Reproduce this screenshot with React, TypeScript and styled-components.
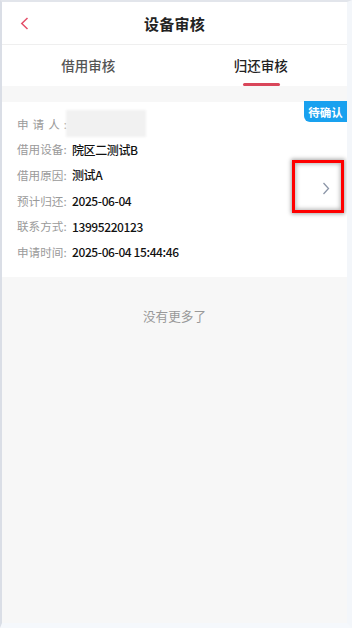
import React from "react";
import styled, { createGlobalStyle } from "styled-components";

const Global = createGlobalStyle`
  html, body { margin: 0; padding: 0; }
  body {
    background: #f4f7fb;
    font-family: "Noto Sans CJK SC", "Noto Sans", sans-serif;
  }
  * { box-sizing: border-box; }
`;

const Frame = styled.div`
  width: 352px;
  height: 628px;
  border-top: 2px solid #e2e5eb;
  border-left: 2px solid #dadee6;
  border-right: 5px solid #f3f6fa;
  border-bottom: 5px solid #f5f8fc;
  background: #f7f7f7;
  display: flex;
  flex-direction: column;
  overflow: hidden;
  position: relative;
`;

const Header = styled.div`
  height: 43px;
  background: #fff;
  display: grid;
  grid-template-columns: 44px 1fr 44px;
  align-items: center;
  border-bottom: 1px solid #efefef;
`;

const Back = styled.div`
  display: flex;
  align-items: center;
  padding-left: 18px;
  height: 100%;
`;

const Title = styled.div`
  text-align: center;
  font-size: 15px;
  font-weight: 700;
  color: #222;
  letter-spacing: 0.2px;
`;

const Tabs = styled.div`
  height: 41px;
  background: #fff;
  display: grid;
  grid-template-columns: 1fr 1fr;
`;

const Tab = styled.div<{ $active?: boolean }>`
  position: relative;
  display: flex;
  align-items: center;
  justify-content: center;
  font-size: 13.5px;
  font-weight: 500;
  color: ${(p) => (p.$active ? "#222" : "#555")};
  padding-bottom: 2px;
  &::after {
    content: "";
    display: ${(p) => (p.$active ? "block" : "none")};
    position: absolute;
    left: 50%;
    bottom: 0;
    width: 37px;
    height: 3px;
    margin-left: -18px;
    border-radius: 2px;
    background: #d9465a;
  }
`;

const List = styled.div`
  padding-top: 16px;
  display: flex;
  flex-direction: column;
`;

const Card = styled.div`
  position: relative;
  background: #fff;
  padding: 9px 0 12px 15px;
  display: flex;
  flex-direction: column;
`;

const Row = styled.div`
  height: 25.6px;
  display: flex;
  align-items: center;
  font-size: 12px;
  white-space: nowrap;
`;

const Label = styled.span<{ $spaced?: boolean }>`
  color: #9a9a9a;
  width: 55px;
  letter-spacing: ${(p) => (p.$spaced ? "4px" : "0")};
  font-size: 11.6px;
`;

const Value = styled.span`
  color: #111;
  font-weight: 500;
  letter-spacing: -0.4px;
`;

const Blur = styled.span`
  display: inline-block;
  width: 80px;
  height: 27px;
  background: #f1f1f1;
  filter: blur(1px);
  margin-left: -6px;
`;

const Badge = styled.div`
  position: absolute;
  top: -1px;
  right: 0;
  width: 43px;
  height: 21px;
  background: #19a1ef;
  color: #fff;
  font-size: 11.5px;
  font-weight: 700;
  display: flex;
  align-items: center;
  justify-content: center;
  border-bottom-left-radius: 6px;
`;

const Arrow = styled.div`
  position: absolute;
  right: 17px;
  top: 80px;
  display: flex;
`;

const Highlight = styled.div`
  position: absolute;
  left: 290px;
  top: 158px;
  width: 52px;
  height: 53px;
  border: 3px solid #ff0000;
  box-shadow: 0 0 4px 1px rgba(0, 0, 0, 0.35), inset 0 0 4px 1px rgba(0, 0, 0, 0.3);
`;

const End = styled.div`
  text-align: center;
  font-size: 12.6px;
  color: #999;
  padding-top: 29px;
`;

export default function App() {
  return (
    <>
      <Global />
      <Frame>
        <Header>
          <Back>
            <svg width="9" height="13" viewBox="0 0 9 13">
              <path d="M7.5 1 L1.8 6.5 L7.5 12" fill="none" stroke="#e4506a" strokeWidth="1.5" />
            </svg>
          </Back>
          <Title>设备审核</Title>
          <div />
        </Header>
        <Tabs>
          <Tab>借用审核</Tab>
          <Tab $active>归还审核</Tab>
        </Tabs>
        <List>
          <Card>
            <Badge>待确认</Badge>
            <Row>
              <Label $spaced>申请人:</Label>
              <Blur />
            </Row>
            <Row>
              <Label>借用设备:</Label>
              <Value>院区二测试B</Value>
            </Row>
            <Row>
              <Label>借用原因:</Label>
              <Value>测试A</Value>
            </Row>
            <Row>
              <Label>预计归还:</Label>
              <Value>2025-06-04</Value>
            </Row>
            <Row>
              <Label>联系方式:</Label>
              <Value>13995220123</Value>
            </Row>
            <Row>
              <Label>申请时间:</Label>
              <Value>2025-06-04 15:44:46</Value>
            </Row>
            <Arrow>
              <svg width="8" height="13" viewBox="0 0 8 13">
                <path d="M1.5 1 L6.5 6.5 L1.5 12" fill="none" stroke="#8c96a8" strokeWidth="1.3" />
              </svg>
            </Arrow>
          </Card>
          <End>没有更多了</End>
        </List>
        <Highlight />
      </Frame>
    </>
  );
}
